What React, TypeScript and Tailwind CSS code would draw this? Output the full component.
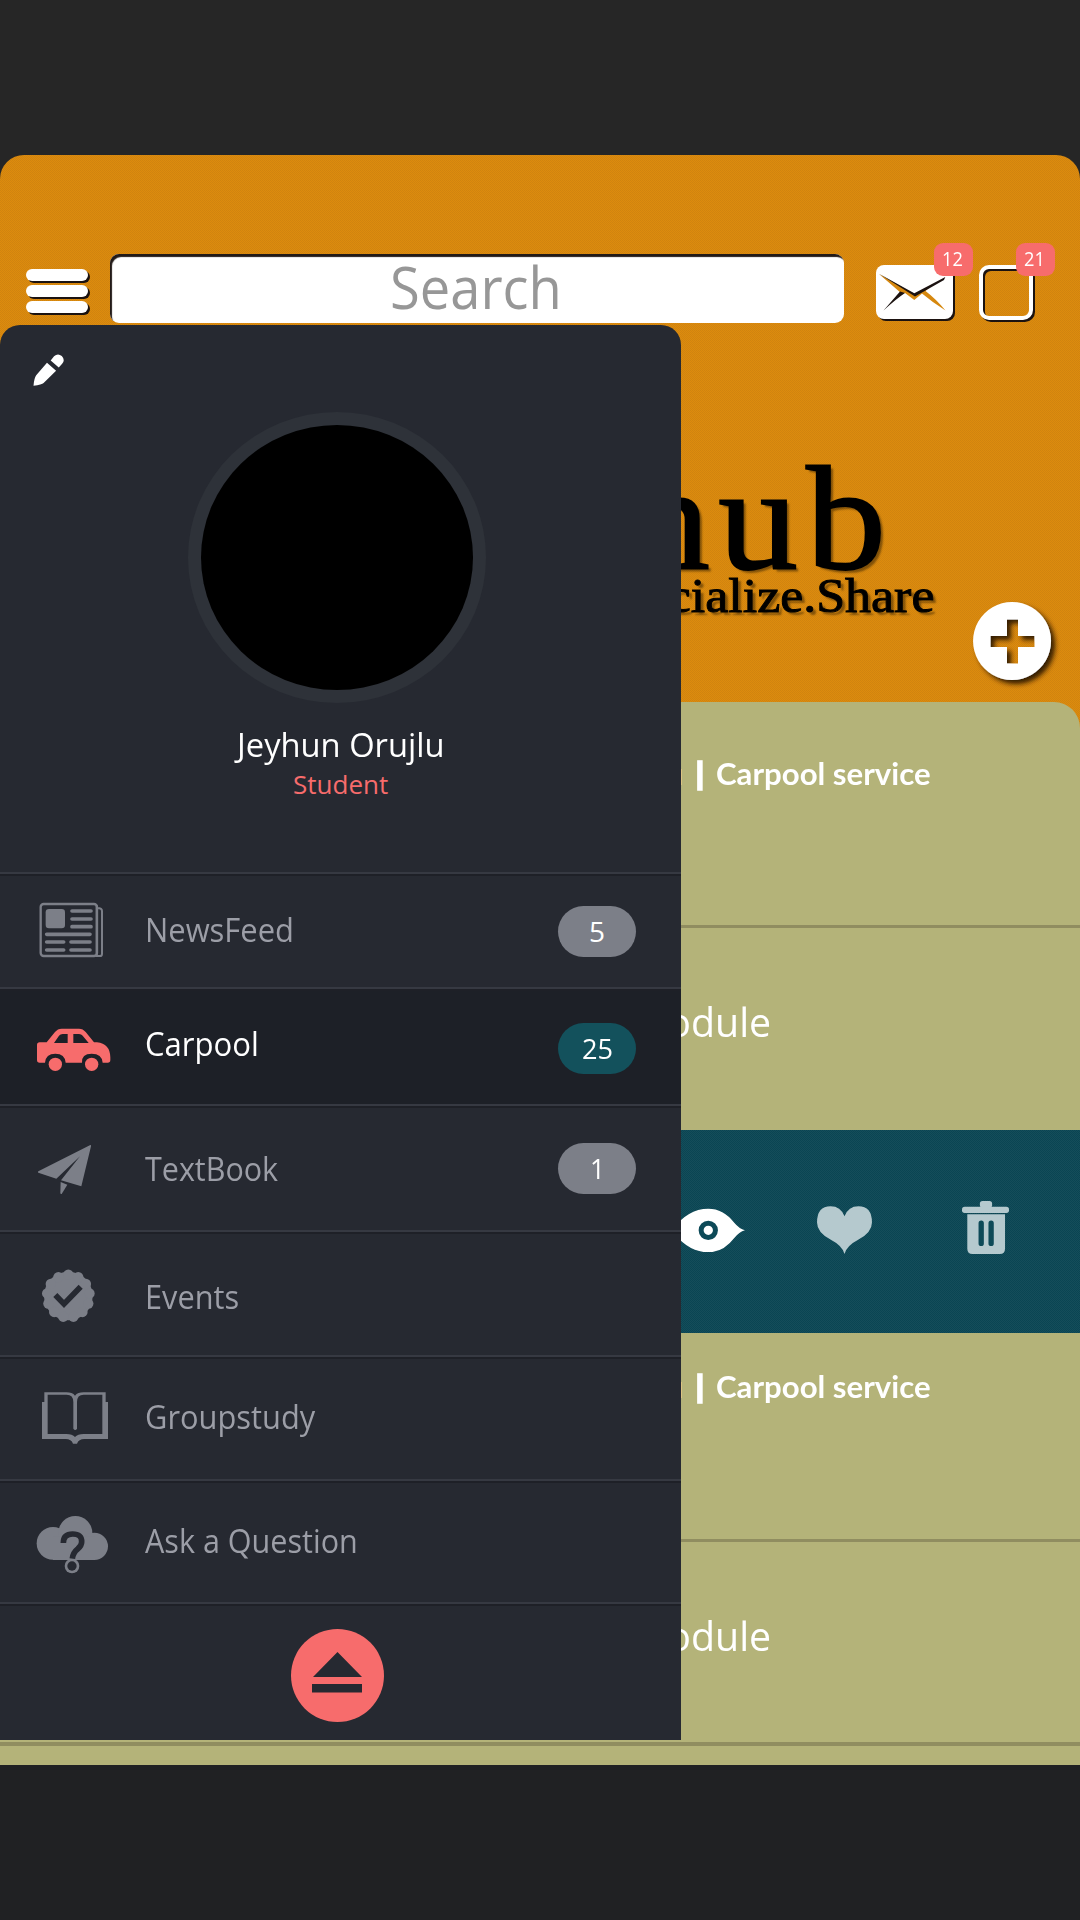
import { useLayoutEffect, useRef, useState } from "react";
import type { ReactNode } from "react";

/* A single line of text, condensed or widened so that it fills its column. */
function Fit({ width, className = "", children }: { width: number; className?: string; children: ReactNode }) {
  const ref = useRef<HTMLSpanElement>(null);
  const [scale, setScale] = useState(1);
  useLayoutEffect(() => {
    if (ref.current) setScale(width / ref.current.offsetWidth);
  }, [width]);
  return (
    <div className={"shrink-0 whitespace-nowrap " + className} style={{ width }}>
      <span ref={ref} className="inline-block origin-left" style={{ transform: `scaleX(${scale})` }}>
        {children}
      </span>
    </div>
  );
}

const GREY = "#7c7f88";

function NewsIcon() {
  return (
    <svg viewBox="90 36 240 345" className="h-full w-[80px]" fill="none" stroke={GREY}>
      <path d="M290 136v152h10q6 0 6-7V153q0-9-14-9" strokeWidth="6" />
      <rect x="122" y="132" width="169" height="156" rx="9" strokeWidth="7" />
      <rect x="137" y="147" width="58" height="58" rx="10" fill={GREY} stroke="none" />
      <path d="M216 153h57M216 177h57M216 200h57M140 223h130M140 246h51M213 246h57M140 270h51M213 270h57" strokeWidth="11" strokeLinecap="round" />
    </svg>
  );
}

function CarIcon() {
  return (
    <svg viewBox="90 381 240 351" className="h-full w-[80px] overflow-visible" fill="#f76c6c">
      <path
        fillRule="evenodd"
        d="M119 547h21l25-31q8-10 20-10h52q12 0 20 10l25 31h9q39 4 40 45v8q0 8-8 8h-15q-2-27-33-27t-29 27h-49q-2-27-31-27t-31 27h-16q-8 0-8-8v-45q0-8 8-8ZM162 549h41v-27h-15q-7 0-11 5ZM220 549h46l-18-22q-4-5-11-5h-17Z"
      />
      <circle cx="166" cy="613" r="20" />
      <circle cx="275" cy="613" r="20" />
    </svg>
  );
}

function PlaneIcon() {
  return (
    <svg viewBox="90 12 240 378" className="h-full w-[80px]" fill={GREY}>
      <path d="M271 135q3 0 2 4l-29 120-61-18 57-72-71 67-54-18q-3-2 0-4Z" />
      <path d="M182 246l20 8-17 28q-4 1-4-3Z" />
    </svg>
  );
}

function SealIcon() {
  const petals = Array.from({ length: 13 }, (_, i) => {
    const a = (i / 13) * Math.PI * 2 - Math.PI / 2;
    return { x: 205 + Math.cos(a) * 64, y: 588 + Math.sin(a) * 64 };
  });
  return (
    <svg viewBox="90 390 240 375" className="h-full w-[80px]" fill={GREY}>
      <circle cx="205" cy="588" r="73" />
      {petals.map((p, i) => (
        <circle key={i} cx={p.x} cy={p.y} r="15.500" />
      ))}
      <path d="M166 585l26 27 50-52" fill="none" stroke="#262931" strokeWidth="17" />
    </svg>
  );
}

function BookIcon() {
  return (
    <svg viewBox="90 15 240 372" className="h-full w-[80px]">
      <path
        fill={GREY}
        fillRule="evenodd"
        d="M133 127h66q18 0 26 10 8-10 26-10h66v29h7v111h-71q-17 0-22 14h-12q-5-14-22-14h-71V156h7ZM143 134v118h56q18 0 26 9 8-9 26-9h56V134h-56q-20 0-20 22v80q-5 8-11 0v-80q0-22-20-22Z"
      />
    </svg>
  );
}

function AskIcon() {
  return (
    <svg viewBox="90 387 240 369" className="h-full w-[80px]">
      <g fill={GREY}>
        <circle cx="159" cy="580" r="49" />
        <circle cx="226" cy="549" r="51" />
        <circle cx="283" cy="589" r="41" />
        <rect x="159" y="560" width="126" height="70" />
        <circle cx="216" cy="648" r="22" />
      </g>
      <path d="M190 579q0-27 28-27t27 24q0 11-12 21-14 11-16 29" fill="none" stroke="#262931" strokeWidth="17" />
      <circle cx="216" cy="648" r="14" fill="#262931" />
    </svg>
  );
}

type Row = {
  label: string;
  width: number;
  icon: ReactNode;
  height: string;
  labelTop: string;
  count?: string;
  countTop?: string;
  countWidth?: number;
  active?: boolean;
};

const rows: Row[] = [
  { label: "NewsFeed", width: 149, icon: <NewsIcon />, height: "h-[115px]", labelTop: "mt-[38px]", count: "5", countTop: "mt-[34px]", countWidth: 16 },
  { label: "Carpool", width: 114, icon: <CarIcon />, height: "h-[117px]", labelTop: "mt-[37px]", count: "25", countTop: "mt-[36px]", countWidth: 31, active: true },
  { label: "TextBook", width: 133, icon: <PlaneIcon />, height: "h-[126px]", labelTop: "mt-[45px]", count: "1", countTop: "mt-[39px]", countWidth: 15 },
  { label: "Events", width: 94, icon: <SealIcon />, height: "h-[125px]", labelTop: "mt-[47px]" },
  { label: "Groupstudy", width: 170, icon: <BookIcon />, height: "h-[124px]", labelTop: "mt-[42px]" },
  { label: "Ask a Question", width: 213, icon: <AskIcon />, height: "h-[123px]", labelTop: "mt-[42px]" },
];

function MenuRow({ row }: { row: Row }) {
  return (
    <li
      className={
        "flex items-start pl-[30px] pr-[45px] shadow-[inset_0_2px_0_#363942,inset_0_4px_0_#1e2027] " +
        row.height +
        (row.active ? " bg-[#1d2027] text-white" : " text-[#9c9ea7]")
      }
    >
      {row.icon}
      <Fit width={row.width} className={"ml-[35px] text-[33px] leading-[40px] " + row.labelTop}>
        {row.label}
      </Fit>
      {row.count && (
        <span
          className={
            "ml-auto flex h-[51px] w-[78px] justify-center rounded-full text-[28px] leading-[50px] text-white " +
            row.countTop +
            (row.active ? " bg-[#13515c]" : " bg-[#7c7f88]")
          }
        >
          <Fit width={row.countWidth ?? 15}>{row.count}</Fit>
        </span>
      )}
    </li>
  );
}

function Drawer() {
  return (
    <aside className="absolute top-[325px] left-0 h-[1415px] w-[681px] rounded-t-[20px] bg-[#262931]">
      <div className="flex h-[547px] flex-col items-center">
        <svg viewBox="96 642 92 95" className="mt-[29px] ml-[33px] h-[32px] w-[32px] self-start" fill="#fff">
          <path d="M136 668l27 24-37 36q-5 5-30 8 2-23 8-31Z" />
          <path d="M147 661l10-12q11-11 23-1 11 12 1 23l-10 11Z" />
        </svg>
        <div className="mt-[26px] mr-[7px] flex h-[291px] w-[298px] items-center justify-center rounded-[50%] bg-[#2e3239]">
          <div className="h-[265px] w-[272px] rounded-[50%] bg-black" />
        </div>
        <Fit width={208} className="mt-[22px] ml-px text-[33px] leading-[40px] text-white">Jeyhun Orujlu</Fit>
        <Fit width={95} className="mt-[2px] text-[26px] leading-[34px] text-[#f76c6c]">Student</Fit>
      </div>
      <ul>
        {rows.map((row) => (
          <MenuRow key={row.label} row={row} />
        ))}
      </ul>
      <div className="flex h-[138px] justify-center pt-[27px] pr-[6px] shadow-[inset_0_2px_0_#363942,inset_0_4px_0_#1e2027]">
        <svg viewBox="0 0 93 93" className="size-[93px]">
          <circle cx="46.500" cy="46.500" r="46.500" fill="#f76c6c" />
          <path d="M46.500 23L71 48H22ZM21 55h50v8.500H21Z" fill="#262931" />
        </svg>
      </div>
    </aside>
  );
}

function Badge({ children, className }: { children: string; className: string }) {
  return (
    <span className={"absolute flex h-[33px] w-[39px] justify-center rounded-[9px] bg-[#f76c6c] pr-[2px] text-[20px] leading-[32px] text-white " + className}>
      <Fit width={21}>{children}</Fit>
    </span>
  );
}

function Header() {
  return (
    <div className="flex items-start pt-[99px]">
      <div className="mt-[15px] ml-[26px] flex flex-col gap-[4px]">
        <i className="h-[12px] w-[62px] rounded-full bg-white shadow-[2px_2px_0_#1b1210]" />
        <i className="h-[12px] w-[62px] rounded-full bg-white shadow-[2px_2px_0_#1b1210]" />
        <i className="h-[12px] w-[62px] rounded-full bg-white shadow-[2px_2px_0_#1b1210]" />
      </div>
      <div className="ml-[22px] h-[69px] w-[734px] rounded-[9px] bg-white pl-[280px] text-[59px] leading-[65px] text-[#979797] shadow-[inset_2px_3px_1px_#221a18]">
        <Fit width={172}>Search</Fit>
      </div>
      <div className="relative mt-[11px] ml-[32px] h-[54px] w-[77px]">
        <svg viewBox="0 0 77 54" className="h-full w-full overflow-visible">
          <rect x="2" y="2" width="77" height="54" rx="8" fill="#1b1210" />
          <rect width="77" height="54" rx="8" fill="#fff" />
          <path d="M3 9L38.300 29 55 21 49.500 26Q60 34 69.500 45.500 56 37 46 28.500L38.300 35 29 28 25 28Z" fill="#d6880f" />
          <path d="M3 8.700L38.300 28.300 69.300 12 68 15 39 31.500Z" fill="#1b1210" />
          <path d="M7.500 45.500L24 26.500 29 28Q20 34 7.500 45.500Z" fill="#1b1210" />
        </svg>
        <Badge className="-top-[22px] left-[58px]">12</Badge>
      </div>
      <div className="relative mt-[11px] ml-[26px] h-[55px] w-[54px]">
        <svg viewBox="0 0 54 55" className="h-full w-full overflow-visible" fill="none" strokeWidth="4">
          <rect x="4" y="4" width="50" height="51" rx="8" stroke="#1b1210" />
          <rect x="2" y="2" width="50" height="51" rx="8" stroke="#fff" />
        </svg>
        <Badge className="-top-[22px] left-[37px]">21</Badge>
      </div>
    </div>
  );
}

function Brand() {
  return (
    <div className="flex flex-col items-end font-['Liberation_Serif',serif] text-black">
      <Fit width={265} className="mt-[121px] mr-[185px] text-[149px] leading-[150px] tracking-[8px] [-webkit-text-stroke:2px_black] [text-shadow:3px_3px_2px_#00000066]">hub</Fit>
      <Fit width={321} className="-mt-[23px] mr-[146px] text-[49px] leading-[50px] [-webkit-text-stroke:1px_black] [text-shadow:3px_3px_2px_#00000066]">Socialize.Share</Fit>
    </div>
  );
}

function AddButton() {
  return (
    <svg viewBox="0 0 90 90" className="absolute top-[446.500px] left-[973px] size-[90px] overflow-visible">
      <defs>
        <filter id="drop" x="-20%" y="-20%" width="150%" height="150%">
          <feDropShadow dx="4" dy="4" stdDeviation="2.500" floodColor="#2a1500" floodOpacity="0.950" />
        </filter>
      </defs>
      <path
        filter="url(#drop)"
        fill="#fff"
        fillRule="evenodd"
        d="M39 0a39 39 0 1 0 .1 0ZM34 17.500h11v16.500h16.500v11H45v16.500H34V45H17.500V34H34Z"
      />
    </svg>
  );
}

function Post({ first = false }: { first?: boolean }) {
  return (
    <article className={"bg-[#b4b379] text-white " + (first ? "h-[428px] rounded-tr-[26px]" : "h-[409px]")}>
      <div className={"flex justify-end border-b-[3px] border-[#908d60] pr-[149px] font-['Lato',sans-serif] text-[30px] leading-[36px] font-bold " + (first ? "h-[226px] pt-[53px]" : "h-[209px] pt-[35px]")}>
        <Fit width={17} className="mr-[12px]">u</Fit>
        <Fit width={10} className="mr-[11px] [-webkit-text-stroke:1.5px_white]">|</Fit>
        <Fit width={215}>Carpool service</Fit>
      </div>
      <div className="flex justify-end pt-[69px] pr-[309px] text-[41px] leading-[48px]">
        <Fit width={139}>Module</Fit>
      </div>
    </article>
  );
}

function Actions() {
  return (
    <div className="flex h-[203px] items-center bg-[#0a4553] bg-[repeating-conic-gradient(#ffffff0b_0_25%,transparent_0_50%)] bg-size-[2px_2px] pb-[3px] pl-[620px]">
      <svg viewBox="-60 262 320 133" className="ml-[20px] h-[44.300px] w-[106.600px]">
        <path d="M35 329q48-65 110-65 45 0 78 42 15 18 32 23-17 5-32 23-33 43-78 43-62 0-110-66Z" fill="#fff" />
        <circle cx="145" cy="329" r="21.500" fill="none" stroke="#0d4a58" strokeWidth="15" />
      </svg>
      <svg viewBox="470 260 166 145" className="ml-[70px] h-[48px] w-[55px]">
        <path d="M553 405q-7-25-40-42-43-22-43-53 0-49 41-49 30 0 42 30 12-30 42-30 41 0 41 49 0 31-43 53-33 17-40 42Z" fill="#b5c9ce" />
      </svg>
      <svg viewBox="905 243 142 160" className="ml-[90px] -mt-[5px] h-[53px] w-[47px]" fill="#b5c9ce">
        <rect x="959" y="243" width="37" height="20" rx="8" />
        <rect x="905" y="260" width="142" height="19" rx="8" />
        <path d="M921 283h114v104q0 16-16 16h-82q-16 0-16-16Z" />
        <path d="M963 310v61M993 310v61" stroke="#0d4a58" strokeWidth="16" strokeLinecap="round" />
      </svg>
    </div>
  );
}

export default function App() {
  return (
    <main className="h-[1920px] w-[1080px] overflow-hidden bg-[#202123] font-['Open_Sans',sans-serif]">
      <div className="h-[155px] bg-[#262626]" />
      <div className="bg-[#262626]">
        <div className="relative h-[573px] overflow-hidden rounded-t-[24px] bg-[#dd8c0d] bg-[repeating-conic-gradient(#7a4a2022_0_25%,transparent_0_50%)] bg-size-[2px_2px]">
          <Header />
          <Brand />
          <AddButton />
        </div>
      </div>
      <div className="relative -mt-[26px] h-[1063px] overflow-hidden">
        <Post first />
        <Actions />
        <Post />
        <div className="h-[23px] border-t-[4px] border-[#908d60] bg-[#b4b379]" />
      </div>
      <Drawer />
    </main>
  );
}
